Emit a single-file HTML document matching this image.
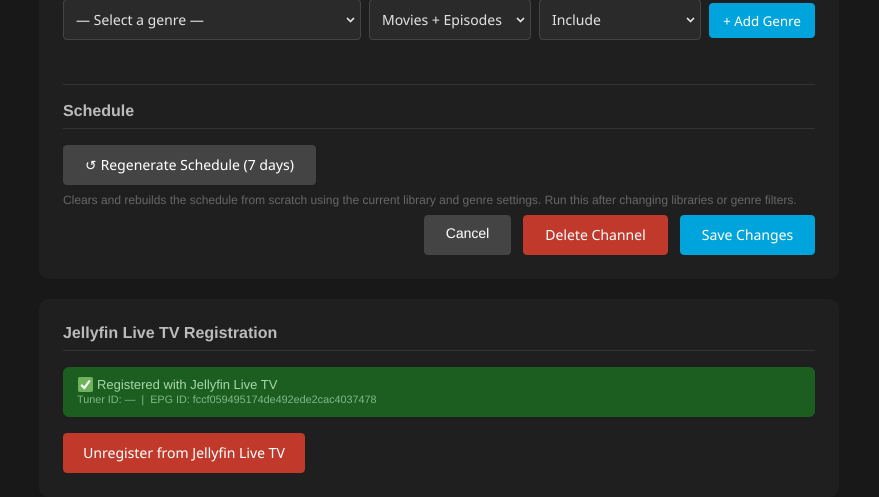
<!DOCTYPE html>
<html><head><meta charset="utf-8"><style>
*{box-sizing:border-box}
html,body{margin:0;padding:0;width:879px;height:497px;overflow:hidden;background:#181818}
body{position:relative;font-family:"Liberation Sans",sans-serif;text-rendering:geometricPrecision}
.a{position:absolute}
.card{position:absolute;left:39px;width:800px;background:#1f1f1f;border-radius:10px}
.n{font-family:"Noto Sans","Noto Sans CJK JP","DejaVu Sans",sans-serif}
.sel{position:absolute;top:-1px;height:41px;background:#2a2a2a;border:1px solid #444;border-radius:4px;color:#e0e0e0;font-size:14px;line-height:41px;padding-left:12px}
.sel svg{position:absolute;top:17px;right:5px}
.btn{position:absolute;border-radius:4px;color:#fff;font-size:14px;text-align:center;white-space:nowrap}
.line{position:absolute;height:1px;background:#333}
.h{position:absolute;font-weight:bold;font-size:16px;color:#bbb;white-space:nowrap}
</style></head><body>
<div class="card" style="top:-20px;height:299px"></div>
<div class="card" style="top:299px;height:198px"></div>

<div class="sel n" style="left:63px;width:298px">— Select a genre —<svg width="9" height="6" viewBox="0 0 9 6"><path d="M1 1L4.5 4.5L8 1" fill="none" stroke="#e0e0e0" stroke-width="1.6"/></svg></div>
<div class="sel n" style="left:369px;width:162px">Movies + Episodes<svg width="9" height="6" viewBox="0 0 9 6"><path d="M1 1L4.5 4.5L8 1" fill="none" stroke="#e0e0e0" stroke-width="1.6"/></svg></div>
<div class="sel n" style="left:539px;width:162px">Include<svg width="9" height="6" viewBox="0 0 9 6"><path d="M1 1L4.5 4.5L8 1" fill="none" stroke="#e0e0e0" stroke-width="1.6"/></svg></div>
<div class="btn n" style="left:709px;top:3px;width:106px;height:35px;background:#00a4dc;font-size:13.33px;line-height:37px">+ Add Genre</div>

<div class="line" style="left:63px;top:84px;width:752px"></div>
<div class="h" style="left:63px;top:103px">Schedule</div>
<div class="line" style="left:63px;top:128px;width:752px"></div>

<div class="btn n" style="left:63px;top:145px;width:253px;height:40px;background:#444;line-height:40px"><span style="display:inline-block;width:15.5px;text-align:left;font-size:13.5px">↺</span>Regenerate Schedule (7 days)</div>
<div class="a" style="left:63px;top:192px;font-size:12px;line-height:16px;color:#666;white-space:nowrap">Clears and rebuilds the schedule from scratch using the current library and genre settings. Run this after changing libraries or genre filters.</div>

<div class="btn" style="left:424px;top:215px;width:87px;height:40px;background:#444;line-height:36px">Cancel</div>
<div class="btn n" style="left:523px;top:215px;width:145px;height:40px;background:#c0392b;line-height:42px">Delete Channel</div>
<div class="btn n" style="left:680px;top:215px;width:135px;height:40px;background:#00a4dc;line-height:42px">Save Changes</div>

<div class="h" style="left:63px;top:325px">Jellyfin Live TV Registration</div>
<div class="line" style="left:63px;top:350px;width:752px"></div>

<div class="a" style="left:63px;top:367px;width:752px;height:50px;background:#1b5e20;border-radius:6px"></div>
<svg class="a" style="left:78px;top:377px" width="15" height="15" viewBox="0 0 15 15"><rect x="0" y="0" width="15" height="15" rx="2" fill="#6fb25c"/><path d="M3.2 7.8L6.3 11L11.8 3.5" fill="none" stroke="#f4f8f0" stroke-width="2.3"/></svg>
<div class="a" style="left:97px;top:376px;font-size:13px;line-height:17px;color:#a5d6a7;white-space:nowrap">Registered with Jellyfin Live TV</div>
<div class="a" style="left:77px;top:393px;font-size:10.8px;line-height:14px;color:#81b784;white-space:pre">Tuner ID: —  |  EPG ID: fccf059495174de492ede2cac4037478</div>

<div class="btn n" style="left:63px;top:433px;width:242px;height:40px;background:#c0392b;line-height:42px">Unregister from Jellyfin Live TV</div>
</body></html>
